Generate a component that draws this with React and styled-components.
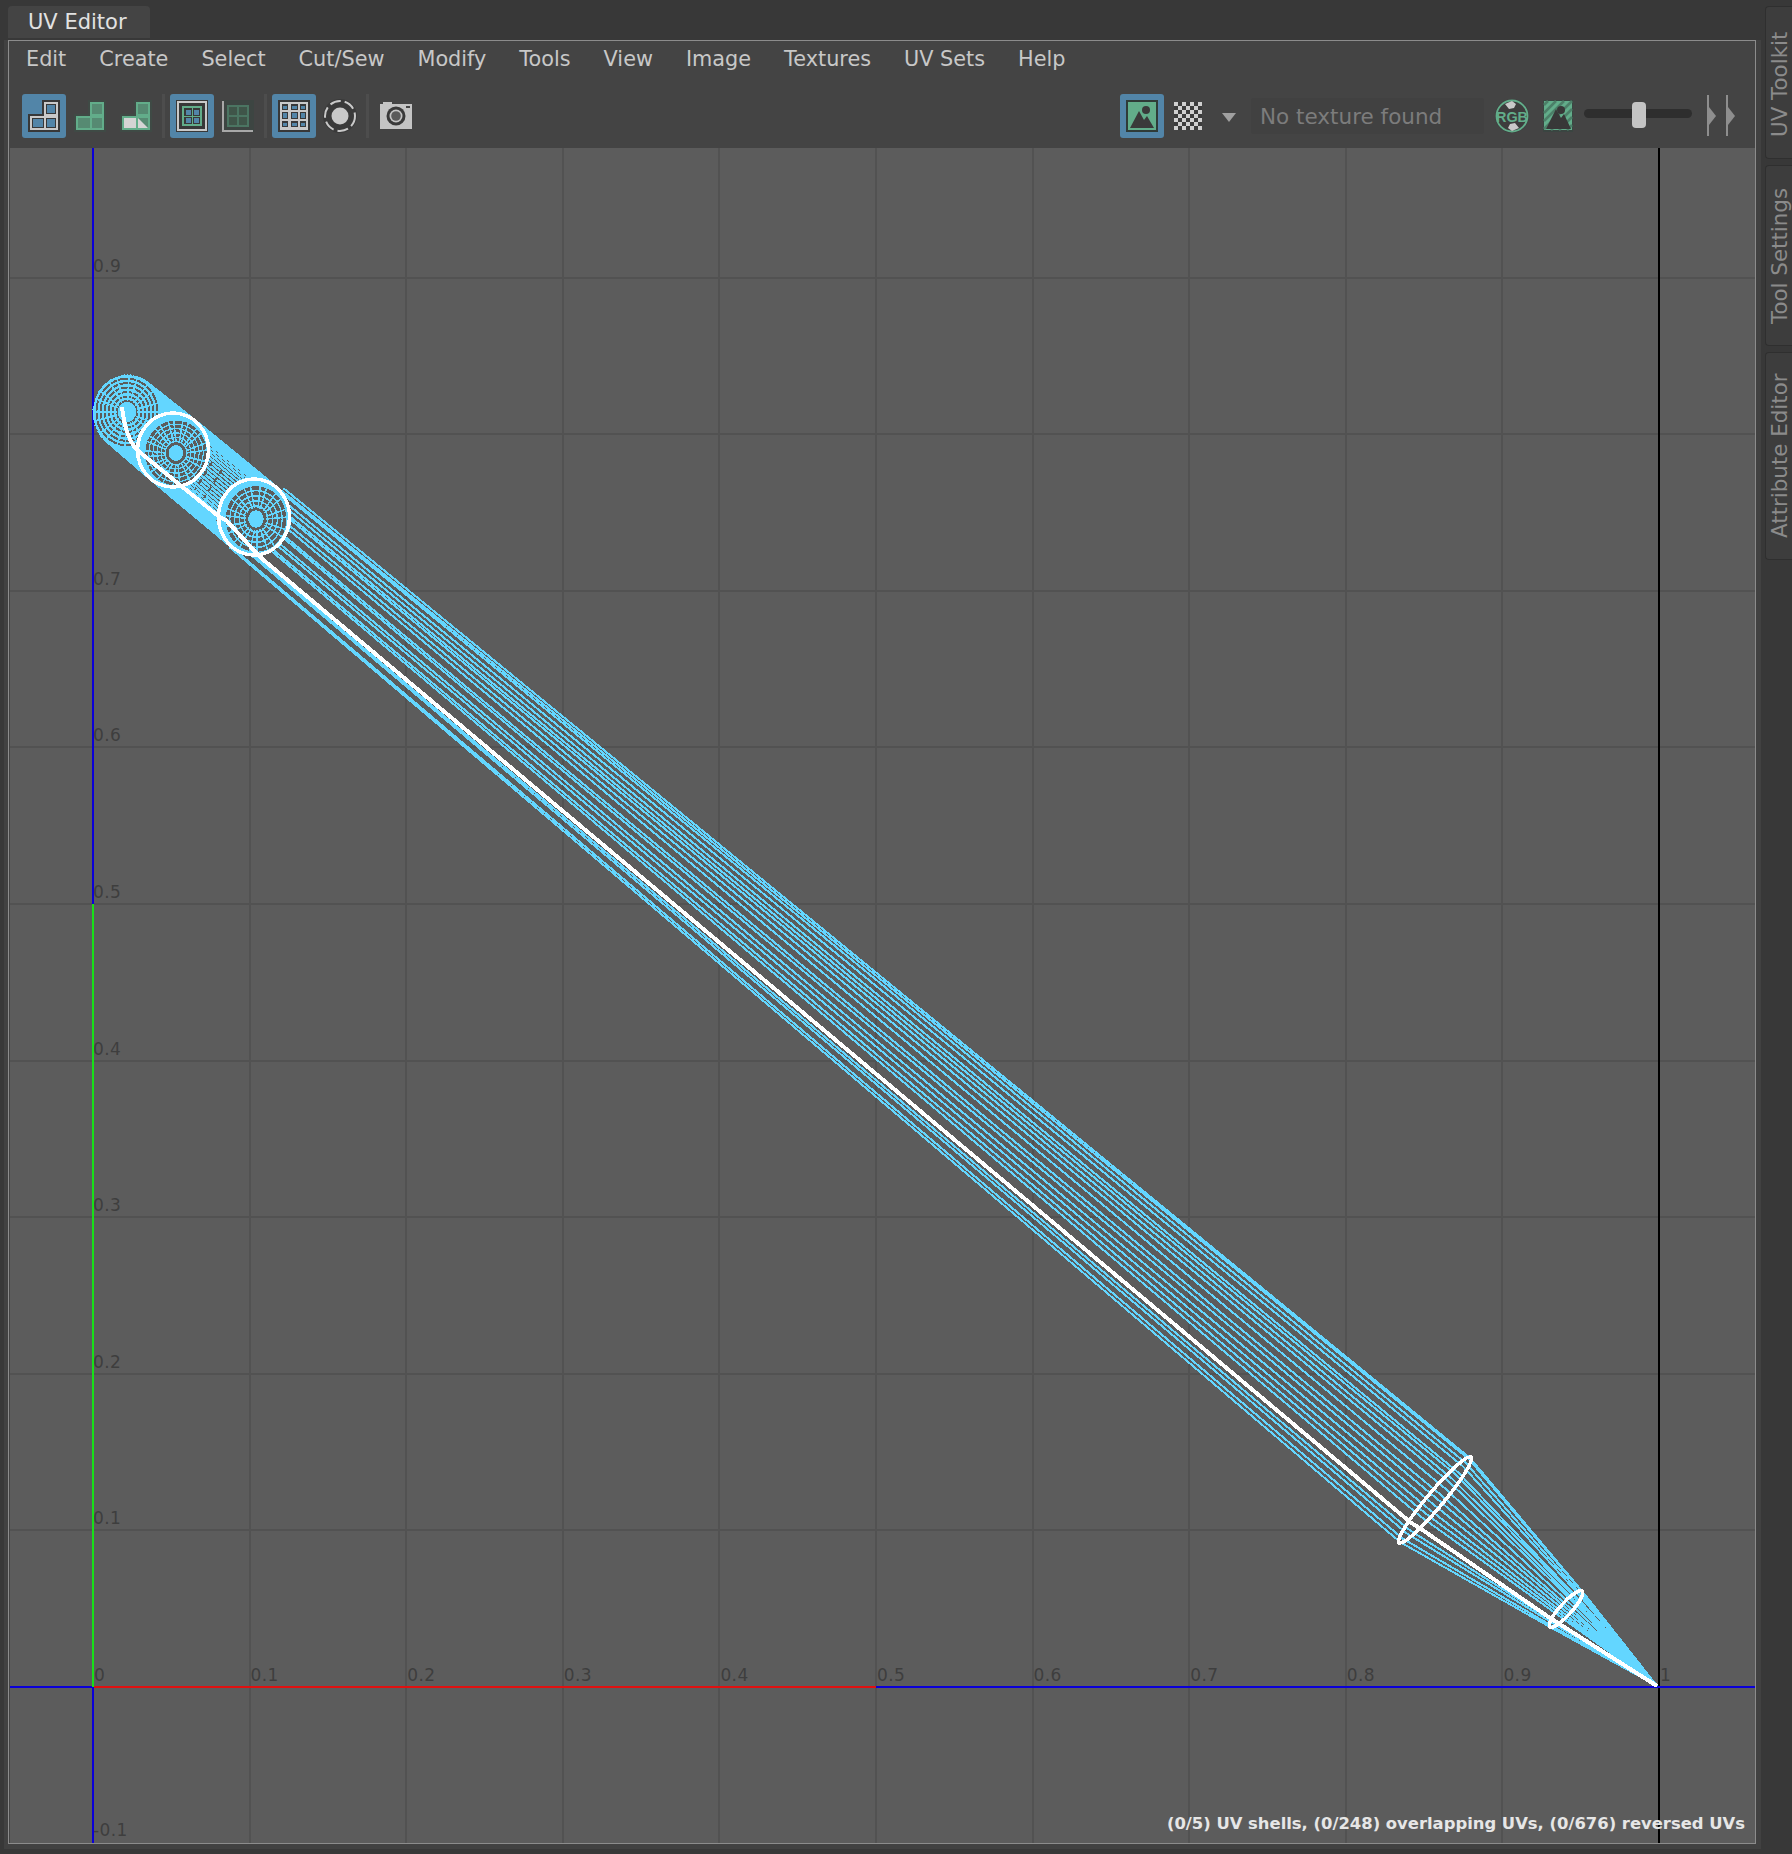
import React from 'react';
import styled, { createGlobalStyle } from 'styled-components';

const Global = createGlobalStyle`
  html, body { margin: 0; padding: 0; background: #383838; }
  #root { width: 1792px; height: 1854px; }
`;

const FONT = `"DejaVu Sans", "Liberation Sans", sans-serif`;

const Page = styled.div`
  width: 1792px; height: 1854px; display: flex; background: #383838;
  font-family: ${FONT}; overflow: hidden;
`;
const Main = styled.div`
  width: 1757px; margin: 0 0 5px 4px; display: flex; flex-direction: column;
`;
const TabStrip = styled.div`
  height: 38px; padding: 6px 0 0 4px; box-sizing: border-box; display: flex;
`;
const EditorTab = styled.div`
  width: 142px; height: 34px; box-sizing: border-box; padding-left: 20px;
  background: #444444; border-radius: 4px 4px 0 0; color: #e2e2e2;
  font-size: 21px; line-height: 33px; white-space: nowrap;
`;
const Frame = styled.div`
  flex: 1; display: flex; padding: 2px 5px 5px 4px; background: linear-gradient(#383838 2px, #414141 2px);
  min-height: 0;
`;
const Panel = styled.div`
  flex: 1; display: flex; flex-direction: column; border: 1px solid #8c8c8c; background: #444444; min-height: 0;
  box-sizing: border-box;
`;
const MenuBar = styled.div`
  height: 37px; box-sizing: border-box; padding: 0 0 2px 17px; display: flex; align-items: center; gap: 33px; flex: none;
`;
const MenuItem = styled.span`
  color: #c8c8c8; font-size: 20.8px; line-height: 20px; white-space: nowrap;
`;
const Toolbar = styled.div`
  flex: none; display: flex; align-items: center; padding: 16px 0 10px 13px; height: 44px; gap: 2px;
`;
const ToolBtn = styled.div`
  flex: none; width: ${p => p.$w || 44}px; height: 44px; border-radius: 3px;
  background: ${p => (p.$on ? '#5285a8' : 'transparent')};
  display: flex; align-items: center; justify-content: center;
  margin-left: ${p => p.$ml || 0}px;
`;
const Sep = styled.div`
  flex: none; width: 3px; height: 44px; background: #4d4d4d; margin: 0 3px 0 2px;
`;
const DropArrow = styled.div`
  flex: none; width: 0; height: 0; margin-left: 10px; margin-top: 2px;
  border-left: 7px solid transparent; border-right: 7px solid transparent; border-top: 9px solid #a0a0a0;
`;
const TextureField = styled.div`
  flex: none; width: 233px; height: 36px; margin-left: 13px; background: #414141; color: #7c7c7c;
  box-sizing: border-box; padding-left: 9px; font-size: 21.5px; line-height: 38px; border-radius: 2px; white-space: nowrap;
`;
const Slider = styled.div`
  position: relative; flex: none; width: 108px; height: 9px; margin: -5px 0 0 9px; background: #2e2e2e; border-radius: 5px;
`;
const Thumb = styled.div`
  position: absolute; left: 48px; top: -7px; width: 14px; height: 26px; background: #c4c4c4; border-radius: 4px;
`;
const Viewport = styled.div`
  position: relative; flex: 1; min-height: 0; background: #5c5c5c; margin: 0 0 0 1px; overflow: hidden;
`;
const Canvas = styled.svg`
  display: block; width: 100%; height: 100%;
`;
const Status = styled.div`
  position: absolute; right: 10px; bottom: 10px; color: #e6e6e6; white-space: nowrap;
  font-family: "DejaVu Sans", "Liberation Sans", sans-serif; font-weight: 700; font-size: 16.4px; line-height: 18px;
`;
const SideTabs = styled.div`
  width: 27px; margin-left: 4px; padding-top: 6px; display: flex; flex-direction: column; gap: 6px;
`;
const SideTab = styled.div`
  height: ${p => p.$h}px; box-sizing: border-box; width: 27px;
  background: #3d3d3d; border: 1px solid #2f2f2f; border-left: none;
  color: #8b8b8b; font-size: 21.4px; writing-mode: vertical-rl; transform: rotate(180deg);
  display: flex; align-items: center; padding: ${p => p.$pad}px 2px 0 0; line-height: 24px; white-space: nowrap;
  border-radius: 0 4px 4px 0;
`;

/* ---------- Icons ---------- */
const Ico = ({ w = 44, h = 44, children }) => (
  <svg width={w} height={h} viewBox={`0 0 ${w} ${h}`} shapeRendering="crispEdges">{children}</svg>
);
const DARK = '#383838';
const LIGHT = '#c9c9c9';
const BLUE = '#5285a8';
const GREEN = '#62ad8a';
const GREEN_D = '#568a72';

const Cell = ({ x, y, w, h, fill, edge }) => (
  <g>
    {edge && <rect x={x} y={y} width={w} height={h} fill={edge} />}
    <rect x={x + (edge ? 1 : 0)} y={y + (edge ? 1 : 0)} width={w - (edge ? 2 : 0)} height={h - (edge ? 2 : 0)} fill={fill} />
  </g>
);
const Shell = ({ mode }) => {
  const blue = mode === 'blue';
  const line = blue ? LIGHT : GREEN;
  const cell = blue ? BLUE : GREEN_D;
  const edge = blue ? DARK : null;
  return (
    <Ico>
      <path d="M20 6h18v32H6V20h14z" fill={blue ? DARK : '#3f4a45'} />
      <path d="M22 8h14v28H8V22h14z" fill={line} />
      <Cell x={24} y={10} w={10} h={10} fill={cell} edge={edge} />
      <Cell x={10} y={24} w={12} h={10} fill={cell} edge={edge} />
      <Cell x={24} y={24} w={10} h={10} fill={cell} edge={edge} />
      {mode === 'uv' && <rect x="10" y="24" width="12" height="10" fill="#d4d4d4" />}
      {mode === 'uv' && <path d="M24 24L34 34H24z" fill="#d4d4d4" shapeRendering="auto" />}
    </Ico>
  );
};
const Frames = ({ on }) => (
  on ? (
    <Ico>
      <rect x="6" y="6" width="32" height="32" fill={DARK} />
      <rect x="8" y="8" width="28" height="28" fill="none" stroke={LIGHT} strokeWidth="2" />
      <rect x="12" y="12" width="20" height="20" fill={GREEN} />
      <rect x="14" y="14" width="16" height="16" fill={DARK} />
      <rect x="22" y="14" width="1" height="16" fill={GREEN} />
      <rect x="14" y="22" width="16" height="1" fill={GREEN} />
      <rect x="16" y="16" width="5" height="5" fill={BLUE} />
      <rect x="24" y="16" width="5" height="5" fill={BLUE} />
      <rect x="16" y="24" width="5" height="5" fill={BLUE} />
      <rect x="24" y="24" width="5" height="5" fill={BLUE} />
    </Ico>
  ) : (
    <Ico>
      <rect x="6" y="6" width="32" height="32" fill="#3d4542" />
      <path d="M7 7v30h30" fill="none" stroke="#a8a8a8" strokeWidth="2" />
      <rect x="11" y="11" width="22" height="22" fill="#4b7562" />
      <rect x="13" y="13" width="8" height="8" fill="#3f5549" />
      <rect x="23" y="13" width="8" height="8" fill="#3f5549" />
      <rect x="13" y="23" width="8" height="8" fill="#3f5549" />
      <rect x="23" y="23" width="8" height="8" fill="#3f5549" />
    </Ico>
  )
);
const GridIco = () => (
  <Ico>
    <rect x="6" y="6" width="32" height="32" fill={DARK} />
    <rect x="8" y="8" width="28" height="28" fill={LIGHT} />
    {[10, 18, 27].map(y => [10, 19, 28].map(x => (
      <rect key={x + '-' + y} x={x} y={y} width={x === 19 ? 7 : 6} height={y === 18 ? 7 : 6} fill={DARK} />
    )))}
    {[11, 19, 28].map(y => [11, 20, 29].map(x => (
      <rect key={x + ':' + y} x={x} y={y + (y === 19 ? 0 : 1)} width={x === 20 ? 5 : 4} height={y === 19 ? 5 : 3} fill={BLUE} />
    )))}
  </Ico>
);
const SoftSel = () => (
  <Ico>
    <circle cx="22" cy="22" r="17" fill="#3a3a3a" shapeRendering="auto" />
    <circle cx="22" cy="22" r="15" fill="none" stroke={LIGHT} strokeWidth="2" strokeDasharray="11 4" shapeRendering="auto" />
    <circle cx="22" cy="22" r="8.5" fill={LIGHT} shapeRendering="auto" />
  </Ico>
);
const Camera = () => (
  <Ico>
    <path d="M6 12h3v-2h9v2h20v25H6z" fill="#c4c4c4" transform="translate(0 -2)" />
    <rect x="32" y="12" width="4" height="1.5" fill="#444" />
    <circle cx="22" cy="22" r="9.5" fill="#3a3a3a" shapeRendering="auto" />
    <circle cx="22" cy="22" r="6.5" fill="#c4c4c4" shapeRendering="auto" />
    <circle cx="22" cy="22" r="4.8" fill="#5a5a5a" shapeRendering="auto" />
  </Ico>
);
const Picture = ({ striped }) => (
  <Ico w={striped ? 30 : 44} h={striped ? 32 : 44}>
    {striped ? (
      <g>
        <rect width="30" height="32" fill="#3a4541" />
        <rect x="1" y="1" width="28" height="29" fill={GREEN} />
        {[-24, -16, -8, 0, 8, 16, 24].map(o => (
          <path key={o} d={`M${Math.max(o, 1)} ${o < 1 ? 30 + o - 1 : 30}L${Math.min(o + 29, 29)} ${o > 0 ? o + 1 : 1}`} stroke="#4c7f68" strokeWidth="2.5" shapeRendering="auto" />
        ))}
        <path d="M3 29L13 9l5 9 3-4 7 15z" fill="#383838" shapeRendering="auto" />
        <circle cx="18" cy="10" r="4" fill="#383838" shapeRendering="auto" />
      </g>
    ) : (
      <g>
        <rect x="6" y="6" width="32" height="32" fill="#2f3b38" />
        <rect x="8" y="8" width="28" height="28" fill={GREEN} />
        <path d="M10 34l9-17 5 9 3-4 7 12z" fill="#3a3a3a" shapeRendering="auto" />
        <circle cx="26" cy="16" r="4" fill="#3a3a3a" shapeRendering="auto" />
      </g>
    )}
  </Ico>
);
const Checker = () => {
  const cells = [];
  for (let r = 0; r < 7; r++) for (let c = 0; c < 7; c++) {
    cells.push(<rect key={r + '-' + c} x={2 + c * 4} y={3 + r * 4} width="4" height="4" fill={(r + c) % 2 === 0 ? '#cfcfcf' : '#3c3c3c'} />);
  }
  return <Ico w={32} h={34}>{cells}</Ico>;
};
const RgbIco = () => (
  <svg width="34" height="34" viewBox="0 0 34 34">
    <circle cx="17" cy="17" r="17" fill="#3d3d3d" />
    <circle cx="17" cy="17" r="15.5" fill="none" stroke={GREEN} strokeWidth="1.8" />
    <path d="M10 5l7-3 4 3-2 4-5 1zM24 29l-7 3-4-3 2-4 5-1z" fill="#c9c9c9" />
    <text x="17" y="23" textAnchor="middle" fontFamily="'Liberation Sans', sans-serif" fontWeight="700" fontSize="15.5" fill={GREEN} textLength="32" lengthAdjust="spacingAndGlyphs">RGB</text>
  </svg>
);
const Flyout = () => (
  <svg width="30" height="42" viewBox="0 0 30 42" shapeRendering="crispEdges">
    <rect x="0" y="0" width="2" height="41" fill="#8e8e8e" />
    <path d="M2 12l7 9-7 9z" fill="#8e8e8e" shapeRendering="auto" />
    <rect x="19" y="0" width="2" height="41" fill="#8e8e8e" />
    <path d="M21 12l7 9-7 9z" fill="#8e8e8e" shapeRendering="auto" />
  </svg>
);

/* ---------- UV canvas ---------- */
const U0 = 93, V0 = 1687, STEP = 1566;
const L = 10, R = 1755, T = 148, B = 1843;
const CYAN = '#63d6ff';
const BG = '#5c5c5c';
const ux = u => U0 + u * STEP;
const vy = v => V0 - v * STEP;
const lerp = (a, b, f) => a + (b - a) * f;
const fm = n => n.toFixed(1);

const ell = (c, rx, ry, t) => [c[0] + Math.cos(t) * rx, c[1] + Math.sin(t) * ry];
const E0 = [127, 412], E1 = [173, 450], E2 = [254, 517];

function wire() {
  let d = '';
  const seg = (a, b) => { d += `M${fm(a[0])} ${fm(a[1])}L${fm(b[0])} ${fm(b[1])}`; };
  const top2 = [283, 489], bot2 = [229, 548], top3 = [1470, 1458], bot3 = [1400, 1542];
  const top4 = [1582, 1591], bot4 = [1550, 1627], tip = [1657, 1686];
  const fr = [0, .015, .06, .1, .17, .2, .25, .29, .36, .43, .48, .54, .6, .65, .7, .86, .9, .96, 1];
  fr.forEach((f, i) => {
    const w = i % 2 ? .012 : -.012;
    const p2 = [lerp(top2[0], bot2[0], f + w), lerp(top2[1], bot2[1], f + w)];
    const p3 = [lerp(top3[0], bot3[0], f), lerp(top3[1], bot3[1], f)];
    const p4 = [lerp(top4[0], bot4[0], f), lerp(top4[1], bot4[1], f)];
    seg(p2, p3); seg(p3, p4); seg(p4, tip);
  });
  const n = 72;
  for (let i = 0; i < n; i++) {
    const t = (i / n) * Math.PI * 2;
    seg(ell(E0, 34, 37, t), ell(E1, 36, 38, t));
    seg(ell(E1, 36, 38, t), ell(E2, 36, 39, t));
  }
  return d;
}

const Mesh = ({ c, rx, ry, rings, width, spokes, off }) => {
  let d = '';
  const m = [c[0] + off, c[1] + off];
  for (let i = 0; i < spokes; i++) {
    const t = (i / spokes) * Math.PI * 2 + (i % 2 ? .06 : 0);
    const a = ell(m, rx * .3, ry * .3, t);
    const b = ell(c, rx, ry, t);
    d += `M${fm(a[0])} ${fm(a[1])}L${fm(b[0])} ${fm(b[1])}`;
  }
  return (
    <g>
      <ellipse cx={c[0]} cy={c[1]} rx={rx} ry={ry} fill={CYAN} />
      {rings.map((s, i) => (
        <ellipse key={i} cx={m[0]} cy={m[1]} rx={rx * s} ry={ry * s} fill="none" stroke={BG} strokeWidth={width} />
      ))}
      <path d={d} stroke={CYAN} strokeWidth="1.6" fill="none" />
    </g>
  );
};

const uLabels = ['0', '0.1', '0.2', '0.3', '0.4', '0.5', '0.6', '0.7', '0.8', '0.9', '1'];
const vLabels = [.9, .8, .7, .6, .5, .4, .3, .2, .1];
const ticks = [1, 2, 3, 4, 5, 6, 7, 8, 9];

const GridLabel = styled.text`
  font-family: "DejaVu Sans", sans-serif; font-size: 17px; fill: #3e3e3e; letter-spacing: 0.4px;
`;

const UVCanvas = () => (
  <Canvas viewBox={`${L} ${T} ${R - L} ${B - T}`} preserveAspectRatio="none">
    <g stroke="#525252" strokeWidth="2" shapeRendering="crispEdges">
      {ticks.map(i => <line key={i} x1={ux(i / 10)} y1={T} x2={ux(i / 10)} y2={B} />)}
      {ticks.map(i => <line key={i} x1={L} y1={vy(i / 10)} x2={R} y2={vy(i / 10)} />)}
    </g>
    {uLabels.map((t, i) => <GridLabel key={t} x={ux(i / 10) + 1} y={1681}>{t}</GridLabel>)}
    {vLabels.map(v => <GridLabel key={v} x={93} y={vy(v) - 6}>{v}</GridLabel>)}
    <GridLabel x={93} y={1836}>-0.1</GridLabel>

    <g shapeRendering="crispEdges" strokeWidth="2">
      <line x1={ux(1)} y1={T} x2={ux(1)} y2={B} stroke="#000" />
      <line x1={L} y1={V0} x2={R} y2={V0} stroke="#0a00d8" />
      <line x1={U0} y1={V0} x2={ux(.5)} y2={V0} stroke="#e01010" />
      <line x1={U0} y1={T} x2={U0} y2={B} stroke="#0a00d8" />
      <line x1={U0} y1={vy(.5)} x2={U0} y2={V0} stroke="#18e018" />
    </g>

    <g shapeRendering="crispEdges">
      <path d={wire()} fill="none" stroke={CYAN} strokeWidth="2" />
      <Mesh c={E0} rx={34} ry={37} rings={[.9, .78, .66, .54, .42, .3]} width={2} spokes={20} off={0} />
      <Mesh c={E1} rx={34} ry={36} rings={[.86, .74, .62, .5, .38, .26]} width={3} spokes={24} off={3} />
      <Mesh c={E2} rx={34} ry={37} rings={[.84, .7, .56, .42, .28]} width={3.5} spokes={22} off={2} />
      <g stroke={BG} strokeWidth="2" fill="none" strokeDasharray="5 5">
        <path d="M212 462L195 490" />
        <path d="M222 470L204 498" />
      </g>
    </g>

    <g fill="none" stroke="#fff" strokeWidth="3.5" shapeRendering="crispEdges">
      <ellipse cx={E1[0]} cy={E1[1]} rx="35.5" ry="37" />
      <ellipse cx={E2[0]} cy={E2[1]} rx="35.5" ry="38" />
      <ellipse cx="1435" cy="1500" rx="56" ry="8" transform="rotate(-50 1435 1500)" />
      <ellipse cx="1566" cy="1609" rx="24" ry="6" transform="rotate(-48 1566 1609)" />
      <path d="M122 407C124 425 128 440 137 450L217 515C222 519 224 519 226 520L260 557L1410 1522L1424 1531L1550 1618L1657 1686" strokeWidth="4" />
    </g>
  </Canvas>
);

const menus = ['Edit', 'Create', 'Select', 'Cut/Sew', 'Modify', 'Tools', 'View', 'Image', 'Textures', 'UV Sets', 'Help'];

export default function App() {
  return (
    <Page>
      <Global />
      <Main>
        <TabStrip><EditorTab>UV Editor</EditorTab></TabStrip>
        <Frame>
          <Panel>
            <MenuBar>
              {menus.map(m => <MenuItem key={m}>{m}</MenuItem>)}
            </MenuBar>
            <Toolbar>
              <ToolBtn $on><Shell mode="blue" /></ToolBtn>
              <ToolBtn><Shell mode="green" /></ToolBtn>
              <ToolBtn><Shell mode="uv" /></ToolBtn>
              <Sep />
              <ToolBtn $on><Frames on /></ToolBtn>
              <ToolBtn><Frames /></ToolBtn>
              <Sep />
              <ToolBtn $on><GridIco /></ToolBtn>
              <ToolBtn><SoftSel /></ToolBtn>
              <Sep />
              <ToolBtn><Camera /></ToolBtn>
              <ToolBtn $on $ml={700}><Picture /></ToolBtn>
              <ToolBtn $w={44}><Checker /></ToolBtn>
              <DropArrow />
              <TextureField>No texture found</TextureField>
              <ToolBtn $w={34} $ml={9}><RgbIco /></ToolBtn>
              <ToolBtn $w={30} $ml={12}><Picture striped /></ToolBtn>
              <Slider><Thumb /></Slider>
              <ToolBtn $w={30} $ml={13}><Flyout /></ToolBtn>
            </Toolbar>
            <Viewport>
              <UVCanvas />
              <Status>(0/5) UV shells, (0/248) overlapping UVs, (0/676) reversed UVs</Status>
            </Viewport>
          </Panel>
        </Frame>
      </Main>
      <SideTabs>
        <SideTab $h={153} $pad={21}>UV Toolkit</SideTab>
        <SideTab $h={181} $pad={21}>Tool Settings</SideTab>
        <SideTab $h={208} $pad={21}>Attribute Editor</SideTab>
      </SideTabs>
    </Page>
  );
}
